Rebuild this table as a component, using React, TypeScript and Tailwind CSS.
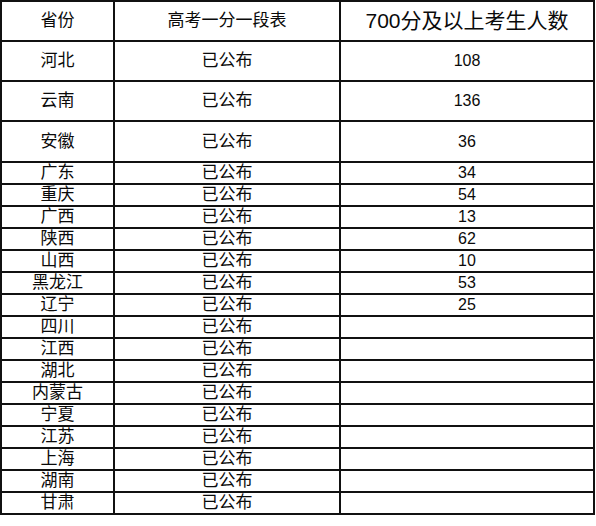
const rows: [string, string, string, string][] = [
  ["河北", "已公布", "108", "h-[40px]"],
  ["云南", "已公布", "136", "h-[40px]"],
  ["安徽", "已公布", "36", "h-[41px]"],
  ["广东", "已公布", "34", "h-[22px]"],
  ["重庆", "已公布", "54", "h-[22px]"],
  ["广西", "已公布", "13", "h-[22px]"],
  ["陕西", "已公布", "62", "h-[22px]"],
  ["山西", "已公布", "10", "h-[22px]"],
  ["黑龙江", "已公布", "53", "h-[22px]"],
  ["辽宁", "已公布", "25", "h-[22px]"],
  ["四川", "已公布", "", "h-[22px]"],
  ["江西", "已公布", "", "h-[22px]"],
  ["湖北", "已公布", "", "h-[22px]"],
  ["内蒙古", "已公布", "", "h-[22px]"],
  ["宁夏", "已公布", "", "h-[22px]"],
  ["江苏", "已公布", "", "h-[22px]"],
  ["上海", "已公布", "", "h-[22px]"],
  ["湖南", "已公布", "", "h-[22px]"],
  ["甘肃", "已公布", "", "h-[22px]"],
];

export default function App() {
  return (
    <div
      className="w-[596px] h-[526px] bg-white text-[#0a0a0a]"
      style={{ fontFamily: '"Liberation Sans", "Noto Sans CJK SC", sans-serif' }}
    >
      <table className="border-collapse table-fixed w-[593px]">
        <colgroup>
          <col className="w-[113px]" />
          <col className="w-[226px]" />
          <col className="w-[254px]" />
        </colgroup>
        <thead>
          <tr className="h-[40px]">
            <th className="border-2 border-[#111] font-normal text-[17px] text-center align-middle p-0">省份</th>
            <th className="border-2 border-[#111] font-normal text-[17px] text-center align-middle p-0">高考一分一段表</th>
            <th className="border-2 border-[#111] font-normal text-[21px] text-center align-middle p-0">700分及以上考生人数</th>
          </tr>
        </thead>
        <tbody>
          {rows.map(([p, s, n, h]) => (
            <tr key={p} className={h}>
              <td className="border-2 border-[#111] text-[17px] leading-[18px] text-center align-middle p-0">{p}</td>
              <td className="border-2 border-[#111] text-[17px] leading-[18px] text-center align-middle p-0">{s}</td>
              <td className="border-2 border-[#111] text-[16px] leading-[18px] text-center align-middle p-0">{n}</td>
            </tr>
          ))}
        </tbody>
      </table>
    </div>
  );
}
